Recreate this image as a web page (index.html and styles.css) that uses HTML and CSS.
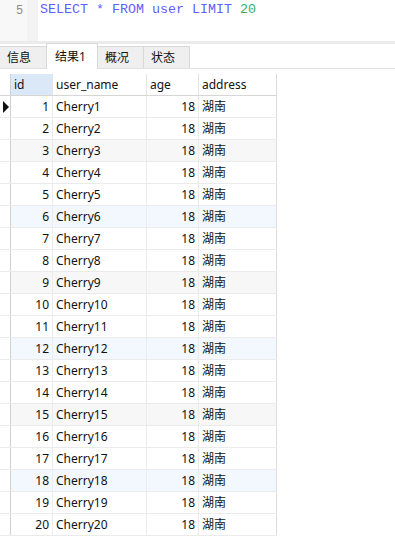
FILE: index.html
```html
<!DOCTYPE html>
<html lang="zh-CN">
<head>
    <meta charset="UTF-8">
    <title>查询结果</title>
    <link rel="stylesheet" href="styles.css">
</head>
<body>

    <div class="editor">
        <div class="gutter">5</div>
        <div class="code">
            <span class="kw">SELECT * FROM user LIMIT</span> <span class="num">20</span>
        </div>
    </div>

    <div class="band"></div>

    <div class="tabs">
        <div class="tab">信息</div>
        <div class="tab active">结果1</div>
        <div class="tab">概况</div>
        <div class="tab">状态</div>
    </div>

    <div class="grid-wrap">
        <table class="grid">
            <thead>
                <tr>
                    <th class="mark"></th>
                    <th class="col-id sel">id</th>
                    <th class="col-name">user_name</th>
                    <th class="col-age">age</th>
                    <th class="col-addr">address</th>
                </tr>
            </thead>
            <tbody id="rows"></tbody>
        </table>
    </div>

    <script>
        var body = document.getElementById('rows');
        for (var i = 1; i <= 20; i++) {
            var tr = document.createElement('tr');
            if (i % 6 === 3) tr.className = 'gray';
            if (i % 6 === 0) tr.className = 'blue';
            tr.innerHTML =
                '<td class="mark">' + (i === 1 ? '<span class="arrow"></span>' : '') + '</td>' +
                '<td class="num-cell">' + i + '</td>' +
                '<td>Cherry' + i + '</td>' +
                '<td class="num-cell">18</td>' +
                '<td>湖南</td>';
            body.appendChild(tr);
        }
    </script>

</body>
</html>
```

FILE: styles.css
```css
/* Layout basico */
body {
    margin: 0;
    background: #fff;
    font-family: "Noto Sans", "Noto Sans CJK SC", sans-serif;
    font-size: 12px;
    color: #111;
}

/* Editor SQL */
.editor {
    display: flex;
    height: 41px;
}

.gutter {
    width: 38px;
    background: linear-gradient(to right, #f8f8f8 27px, #f3f3f3 27px);
    color: #8a8a8a;
    font-family: "Liberation Sans", sans-serif;
    font-size: 12px;
    padding: 3px 15px 0 0;
    box-sizing: border-box;
    text-align: right;
}

.code {
    padding: 2px 0 0 2px;
    font-family: "Liberation Mono", monospace;
    font-size: 13.33px;
    line-height: 16px;
}

.kw {
    color: #6060ff;
}

.num {
    color: #3dab5a;
}

.band {
    height: 3px;
    background: #ebebeb;
}

/* Abas */
.tabs {
    display: flex;
    height: 24px;
    border-bottom: 1px solid #e2e2e2;
    align-items: flex-end;
}

.tab {
    height: 21px;
    line-height: 21px;
    padding: 0 7px;
    background: #efefef;
    border: 1px solid #d8d8d8;
    border-bottom: none;
    margin-right: -1px;
    min-width: 30px;
}

.tab:first-child {
    border-left: none;
    width: 32px;
}

.tab.active {
    line-height: 26px;
    background: #fff;
    padding: 0 8px;
    width: 34px;
    position: relative;
    margin-bottom: -1px;
    height: 25px;
}

.tab:nth-child(3),
.tab:nth-child(4) {
    width: 31px;
}

/* Grade de resultados */
.grid-wrap {
    padding-top: 5px;
}

.grid {
    border-collapse: collapse;
    table-layout: fixed;
}

.grid th,
.grid td {
    height: 21px;
    padding: 0 3px;
    border: 1px solid #ebebeb;
    white-space: nowrap;
    line-height: 21px;
}

.grid th {
    font-weight: normal;
    text-align: left;
    border-top: none;
    border-bottom: 1px solid #d6d6d6;
    border-right: 1px solid #e4e4e4;
}

.grid th.sel {
    background: #dae8f7;
}

.grid .mark {
    width: 10px;
    padding: 0;
    border-left: none;
    border-right: 1px solid #d0d0d0;
    position: relative;
}

.col-id { width: 35px; }
.col-name { width: 87px; }
.col-age { width: 45px; }
.col-addr { width: 71px; }

.grid th:last-child,
.grid td:last-child {
    border-right: 1px solid #dcdcdc;
}

.num-cell {
    text-align: right;
}

tr.gray td {
    background: #f7f7f7;
}

tr.blue td {
    background: #f2f8fd;
}

tr.gray td.mark,
tr.blue td.mark {
    background: #fff;
}

.arrow {
    position: absolute;
    left: 3px;
    top: 5px;
    border-left: 6px solid #111;
    border-top: 6px solid transparent;
    border-bottom: 6px solid transparent;
}
```
